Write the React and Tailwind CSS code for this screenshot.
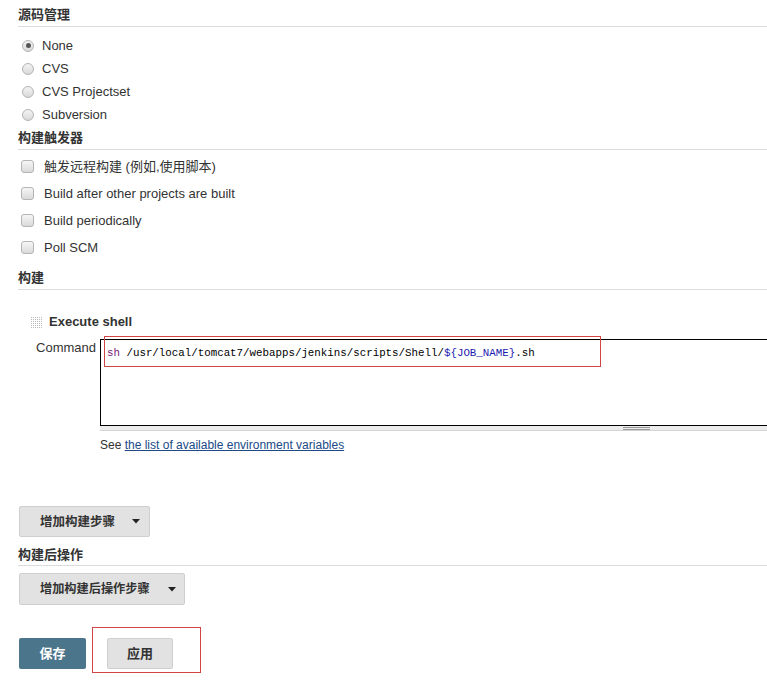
import React from "react";

function Radio({ checked }) {
  return (
    <span className="relative ml-[4px] flex h-[12px] w-[12px] shrink-0 items-center justify-center rounded-full border border-[#b4b4b4] bg-gradient-to-b from-[#f4f4f4] to-[#d9d9d9]">
      {checked && <span className="h-[5px] w-[5px] rounded-full bg-[#555]" />}
    </span>
  );
}

function Check() {
  return (
    <span className="ml-[3px] h-[13px] w-[13px] shrink-0 rounded-[3px] border border-[#b4b4b4] bg-gradient-to-b from-[#f6f6f6] to-[#dadada]" />
  );
}

function Handle() {
  const dots = [];
  for (let r = 0; r < 6; r++) {
    for (let c = 0; c < 6; c++) {
      dots.push(<rect key={r + "-" + c} x={c * 2 + 1} y={r * 2 + 1} width="1" height="1" fill="#b9b9b9" />);
    }
  }
  return (
    <svg width="13" height="13" viewBox="0 0 13 13" className="shrink-0">
      {dots}
    </svg>
  );
}

function Caret() {
  return (
    <svg width="8" height="5" viewBox="0 0 8 5" className="shrink-0">
      <path d="M0 0 L8 0 L4 4.5 Z" fill="#222" />
    </svg>
  );
}

export default function App() {
  return (
    <div className="relative h-[692px] w-full overflow-hidden bg-white font-['Liberation_Sans','Noto_Sans_CJK_SC',sans-serif] text-[13px] text-[#333]">
      <div className="pl-[18px]">
        {/* 源码管理 */}
        <div className="h-[27px] border-b border-[#dcdcdc] pt-[6px] text-[13px] font-bold leading-[18px] text-[#333]">
          源码管理
        </div>
        <div className="mt-[7px]">
          {["None", "CVS", "CVS Projectset", "Subversion"].map((t, i) => (
            <div key={t} className="flex h-[23px] items-center gap-[8px]">
              <Radio checked={i === 0} />
              <span className="leading-[16px]">{t}</span>
            </div>
          ))}
        </div>

        {/* 构建触发器 */}
        <div className="h-[24px] border-b border-[#dcdcdc] pt-[3px] font-bold leading-[18px]">构建触发器</div>
        <div className="mt-[3px]">
          {["触发远程构建 (例如,使用脚本)", "Build after other projects are built", "Build periodically", "Poll SCM"].map((t) => (
            <div key={t} className="flex h-[27px] items-center gap-[10px]">
              <Check />
              <span className="leading-[16px]">{t}</span>
            </div>
          ))}
        </div>

        {/* 构建 */}
        <div className="h-[29px] border-b border-[#dcdcdc] pt-[8px] font-bold leading-[18px]">构建</div>

        <div className="mt-[22px] flex h-[20px] items-center gap-[6px] pl-[12px]">
          <Handle />
          <span className="font-bold leading-[18px]">Execute shell</span>
        </div>

        <div className="mt-[7px] flex">
          <div className="flex w-[82px] shrink-0 justify-end pr-[4px] pt-[1px] leading-[16px]">Command</div>
          <div className="w-[1073px] shrink-0">
            <div className="h-[87px] border border-black bg-white pl-[6px] pt-[6px] font-['Liberation_Mono',monospace] text-[10.8px] leading-[14px] whitespace-pre text-black">
              <span className="text-[#7a1a7a]">sh</span>
              <span> /usr/local/tomcat7/webapps/jenkins/scripts/Shell/</span>
              <span className="text-[#1a1ab0]">{"${JOB_NAME}"}</span>
              <span>.sh</span>
            </div>
            <div className="flex h-[5px] items-center border-b border-[#d4d4d4] bg-[#ececec]">
              <div className="ml-[523px] flex w-[27px] flex-col gap-[1px]">
                <div className="h-px bg-[#999]" />
                <div className="h-px bg-[#999]" />
              </div>
            </div>
            <div className="mt-[6px] text-[12px] leading-[16px]">
              See <span className="text-[#204a87] underline">the list of available environment variables</span>
            </div>
          </div>
        </div>

        <div className="ml-[1px] mt-[53px] flex h-[31px] w-[131px] items-center rounded-[2px] border border-[#cfcfcf] bg-[#e2e2e2] pl-[20px]">
          <span className="text-[12.5px] font-bold leading-[16px]">增加构建步骤</span>
          <span className="ml-[17px]"><Caret /></span>
        </div>

        {/* 构建后操作 */}
        <div className="mt-[7px] h-[22px] border-b border-[#dcdcdc] pt-[2px] font-bold leading-[18px]">构建后操作</div>

        <div className="ml-[1px] mt-[7px] flex h-[32px] w-[166px] items-center rounded-[2px] border border-[#cfcfcf] bg-[#e2e2e2] pl-[20px]">
          <span className="text-[12.2px] font-bold leading-[16px]">增加构建后操作步骤</span>
          <span className="ml-[18px]"><Caret /></span>
        </div>

        <div className="ml-[1px] mt-[33px] flex gap-[21px]">
          <div className="flex h-[31px] w-[67px] items-center justify-center rounded-[2px] bg-[#4b758b] text-[13px] font-bold text-white">
            保存
          </div>
          <div className="flex h-[31px] w-[66px] items-center justify-center rounded-[2px] border border-[#cfcfcf] bg-[#e2e2e2] text-[13px] font-bold text-[#333]">
            应用
          </div>
        </div>
      </div>

      {/* annotation boxes */}
      <div className="pointer-events-none absolute left-[104px] top-[336px] h-[31px] w-[497px] border border-[#d04545]" />
      <div className="pointer-events-none absolute left-[92px] top-[627px] h-[46px] w-[109px] border border-[#d04545]" />
    </div>
  );
}
